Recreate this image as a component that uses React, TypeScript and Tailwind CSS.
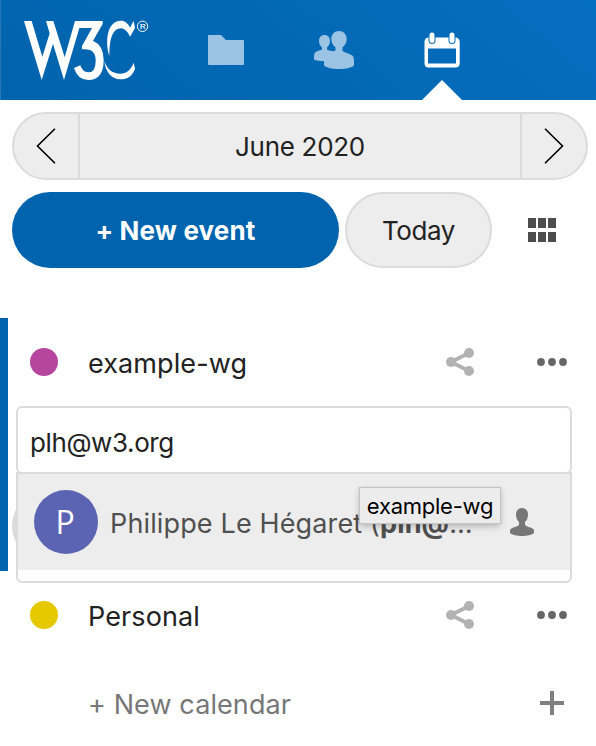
import React from "react";

function W3CLogo() {
  return (
    <svg className="h-[100px] w-[160px]" viewBox="0 0 480 300" fill="white" aria-label="W3C">
      <path d="M72 63H95L127 170L149 100L138 63H160L194 172L225 63H308V72L279 122Q311 136 311 180Q311 240 265 240Q233 240 222 204L241 196Q248 217 265 217Q287 217 287 182Q287 148 255 148H246V138L276 84H238L192 240L159 131L125 240Z" />
      <path d="M401 62L405 84L390 110C384 96 374 85 363 85C339 85 328 113 328 167C314 124 322 62 362 62C376 62 384 70 390 83Z" />
      <path d="M313 184C322 210 339 221 360 221C381 221 393 208 401 188L405 206C398 227 383 238 360 238C334 238 316 214 313 184Z" />
      <circle cx="427.500" cy="79" r="15.5" fill="none" stroke="white" strokeWidth="3" />
      <text x="428" y="87" fontSize="23" textAnchor="middle" stroke="white" strokeWidth="0.6" className="font-['Liberation_Sans']">R</text>
    </svg>
  );
}

function ShareIcon() {
  return (
    <svg className="size-7" viewBox="0 0 28 28" fill="#b2b2b2">
      <path d="M23 5L5 14L23 23" fill="none" stroke="#b2b2b2" strokeWidth="4" />
      <circle cx="5" cy="14" r="5" />
      <circle cx="23" cy="5" r="5" />
      <circle cx="23" cy="23" r="5" />
    </svg>
  );
}

function DotsIcon() {
  return (
    <svg className="h-8 w-[30px]" viewBox="0 0 30 32" fill="#666">
      <circle cx="4" cy="16" r="3.9" />
      <circle cx="15" cy="16" r="3.9" />
      <circle cx="26" cy="16" r="3.9" />
    </svg>
  );
}

function CalendarRow({ name, dot }: { name: string; dot: string }) {
  return (
    <div className="flex h-[88px] items-center pr-[29px] text-[27px] text-[#222]">
      <span className={`size-7 shrink-0 rounded-full ${dot}`} />
      <span className="ml-[30px] flex-1 pt-[3px] tracking-[0.1px]">{name}</span>
      <ShareIcon />
      <span className="ml-[63px]"><DotsIcon /></span>
    </div>
  );
}

export default function App() {
  return (
    <div className="h-[746px] w-[596px] overflow-hidden bg-white font-['Inter','Liberation_Sans',sans-serif] text-[26px] leading-8 text-[#222]">
      <header className="flex h-[100px] bg-linear-[40deg,#0063ad,#046ebe] shadow-[inset_1px_0_0_#2678b8]">
        <W3CLogo />
        <nav className="ml-10 flex">
          <div className="flex w-[52px] items-center justify-center">
            <svg className="h-[100px] w-[52px]" viewBox="0 0 52 100" fill="#9bc3e3">
              <path d="M9 35H21L26 40H43Q44 40 44 41V64Q44 65 43 65H9Q8 65 8 64V36Q8 35 9 35Z" />
            </svg>
          </div>
          <svg className="ml-[54px] h-[100px] w-14" viewBox="306 0 56 100" fill="#9bc3e3">
            <path d="M324.500 35C328 35 330 37.500 330 40.500C330 44 329 45.500 327 47.500V49.500C329 50.500 331 51.200 333.500 51.200L337 50V56L324.500 61.200C320 61.200 316 60.500 314 59.500C314 56 314.200 53.500 315 52.500C317 51 320 50.500 322 49.500V47.500C320 45.500 319 44 319 40.500C319 37.500 321 35 324.500 35Z" />
            <path d="M339 31C343.500 31 346.700 34.500 346.700 39C346.700 43 345 45 342.500 47.500V51C345 53 350 53.500 353 56C354 58 354.200 61 354 65C353 67.500 346 69 339 69C332 69 325 67.500 324 65V61C324 58 324 57 325 56C328 53.500 333 53 335.500 51V47.500C333 45 331.300 43 331.300 39C331.300 34.500 334.500 31 339 31Z" />
          </svg>
          <svg className="ml-[50px] h-[100px] w-[60px]" viewBox="412 0 60 100">
            <path fill="white" fillRule="evenodd" d="M428 37.500H456Q459.700 38 459.700 42V63Q459.700 67.500 455.500 67.500H428.500Q424.500 67.500 424.500 63V42Q424.500 38 428 37.500ZM428 48.500V63.500H456V48.500Z" />
            <path d="M432 35V40.500M452 35V40.500" stroke="#056cba" strokeWidth="7" strokeLinecap="round" />
            <path d="M432 35V40.500M452 35V40.500" stroke="white" strokeWidth="5" strokeLinecap="round" />
            <path fill="white" d="M422 100L442 80L462 100Z" />
          </svg>
        </nav>
      </header>

      <section className="pt-3 pr-2 pl-3">
        <div className="flex h-[68px] overflow-hidden rounded-full border-2 border-[#dbdbdb] bg-[#ededed]">
          <button className="flex w-[66px] items-center justify-center border-r-2 border-[#dbdbdb]">
            <svg className="h-9 w-5" viewBox="0 0 20 36" fill="none" stroke="#000" strokeWidth="1.6"><path d="M19 .8L1.500 18L19 35.200" /></svg>
          </button>
          <button className="flex-1 pt-0.5 tracking-[-0.3px]">June 2020</button>
          <button className="flex w-[66px] items-center justify-center border-l-2 border-[#dbdbdb]">
            <svg className="h-9 w-5" viewBox="0 0 20 36" fill="none" stroke="#000" strokeWidth="1.6"><path d="M1 .8L18.500 18L1 35.200" /></svg>
          </button>
        </div>
        <div className="mt-3 flex h-[76px] items-center">
          <button className="h-full w-[327px] rounded-full bg-[#0063ad] pt-0.5 text-[26px] font-bold tracking-[0.15px] text-white">+ New event</button>
          <button className="ml-1.5 h-full w-[147px] rounded-full border-2 border-[#dbdbdb] bg-[#ededed] pt-0.5 tracking-[-0.4px]">Today</button>
          <div className="ml-9 grid grid-cols-3 gap-x-0.5 gap-y-1">
            {[0, 1, 2, 3, 4, 5].map((i) => <span key={i} className="h-2.5 w-2 bg-[#4d4d4d]" />)}
          </div>
        </div>
      </section>

      <main className="mt-[50px]">
        <section className="h-[253px] border-l-8 border-[#0063ad] pl-[22px]">
          <CalendarRow name="example-wg" dot="bg-[#b6469d]" />
          <div className="relative -ml-[14px] h-[177px] w-[556px]">
            <span className="absolute top-[84px] -left-1 size-[72px] rounded-full bg-[#dbdbdb]" />
            <div className="relative h-[68px] rounded-md border-2 border-[#dbdbdb] bg-white px-3 pt-[19px] tracking-[-0.4px]">plh@w3.org</div>
            <div className="relative -mt-0.5 h-[111px] rounded-b-md border-2 border-[#dbdbdb] bg-white">
              <div className="flex h-24 items-center bg-[#ededed] pl-4">
                <span className="flex size-16 items-center justify-center rounded-full bg-[#5b64b3] pr-0.5 font-['Open_Sans'] text-[32px] text-white">P</span>
                <span className="ml-3 w-[364px] pt-[3px] text-[27px] tracking-[0.14px] whitespace-nowrap text-[#505050]">Philippe Le Hégaret (<b>plh@</b>…</span>
                <svg className="ml-9 h-7 w-6" viewBox="0 0 24 28" fill="#777"><path d="M12 0C16 0 18 3 18 6.500C18 10 17 12 15 14V17C18 19.500 22 19 24 22V25C22 27 17 28 12 28C7 28 2 27 0 25V22C2 19 6 19.500 9 17V14C7 12 6 10 6 6.500C6 3 8 0 12 0Z" /></svg>
              </div>
              <div className="absolute top-[14px] left-[342px] flex h-[35px] w-[140px] items-center justify-center bg-[#ececec] text-[22px] tracking-[-0.25px] text-black shadow-[0_0_1px_1px_#c4c4c4,0_3px_7px_#0004]">example-wg</div>
            </div>
          </div>
        </section>
        <section className="pl-[30px]">
          <CalendarRow name="Personal" dot="bg-[#e5c800]" />
          <div className="flex h-[88px] items-center pr-8 pl-[58px] text-[27px] text-[#777]">
            <span className="flex-1 pt-[3px] tracking-[0.1px]">+ New calendar</span>
            <svg className="size-6" viewBox="0 0 24 24" fill="#808080"><path d="M10 0H14V10H24V14H14V24H10V14H0V10H10Z" /></svg>
          </div>
        </section>
      </main>
    </div>
  );
}
